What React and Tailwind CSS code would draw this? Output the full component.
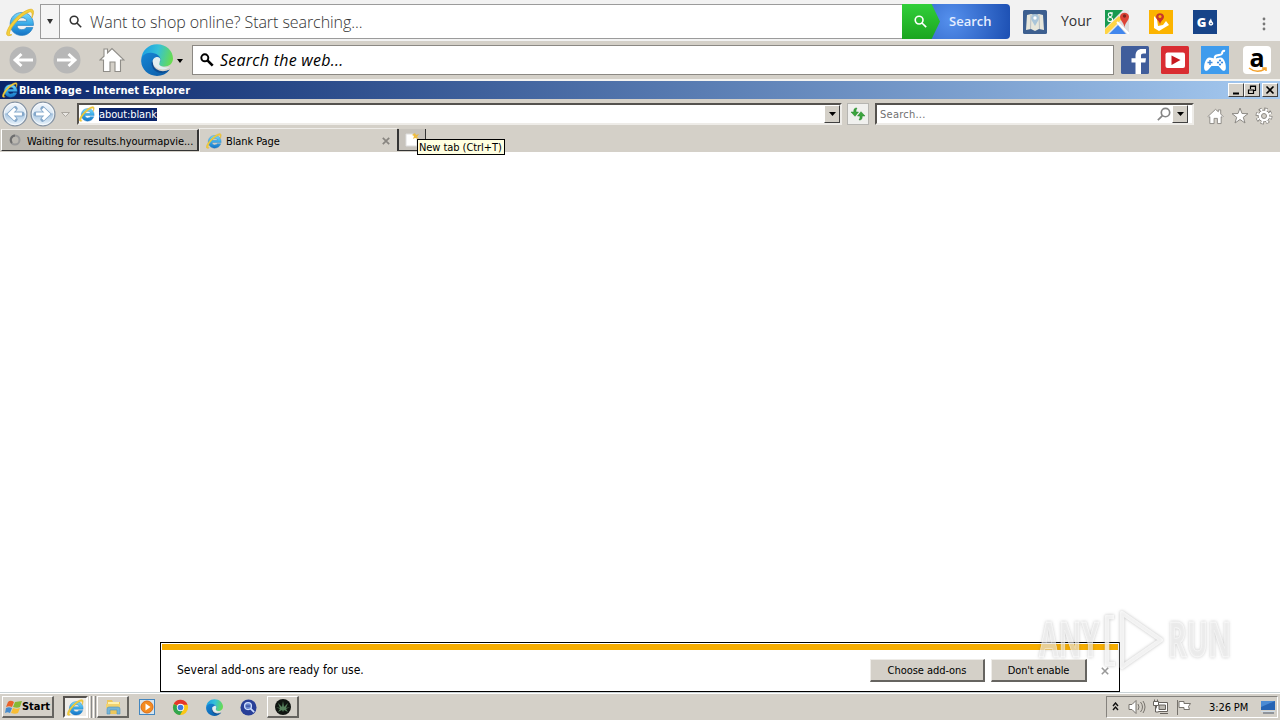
import React from "react";

const UI = "font-['DejaVu_Sans_Condensed','DejaVu_Sans',sans-serif]";
const SEGOE = "font-['Open_Sans','Noto_Sans',sans-serif]";

function Explorer({ id, className }) {
  return (
    <svg viewBox="0 0 28 28" className={className}>
      <defs>
        <linearGradient id={id} x1="0" y1="0" x2="0" y2="1">
          <stop offset="0" stopColor="#7ddcfb" />
          <stop offset=".55" stopColor="#31a5e6" />
          <stop offset="1" stopColor="#1672c4" />
        </linearGradient>
      </defs>
      <path
        d="M26.500 16.800H10.600c.2 2.600 2.100 4.100 4.700 4.100 2 0 3.300-.7 4.200-2.100h6.400c-1.600 4.700-5.700 7.700-10.700 7.700C8.700 26.500 4 21.800 4 15.500S8.800 4.300 15.300 4.300c6.700 0 11.600 5.100 11.200 12.500zM10.700 12.800h9.500c-.4-2.200-2.300-3.500-4.700-3.500s-4.300 1.300-4.800 3.500z"
        fill={`url(#${id})`}
        stroke="#2b83c4"
        strokeWidth=".7"
      />
      <path
        d="M25 9.500C27.500 4 27 .5 23 1.300 15.500 2.800 4.800 13.500 1.600 21c-2 4.700-.8 7.200 4 4.800C3 26.300 2.800 24.200 4.500 20.800 8.200 13.800 17.500 5.200 22.500 3.800c2.700-.7 3.300 1.600 2.500 5.700z"
        fill="#f4d03b"
        stroke="#e3b52a"
        strokeWidth=".8"
      />
    </svg>
  );
}

function Edge({ id, className }) {
  return (
    <svg viewBox="0 0 32 32" className={className}>
      <defs>
        <linearGradient id={id + "t"} x1="0" y1=".3" x2="1" y2=".5">
          <stop offset="0" stopColor="#1b9de2" />
          <stop offset=".5" stopColor="#35c1d8" />
          <stop offset="1" stopColor="#68dc50" />
        </linearGradient>
        <linearGradient id={id + "b"} x1="0" y1="0" x2="1" y2="1">
          <stop offset="0" stopColor="#1686d5" />
          <stop offset="1" stopColor="#0c59a4" />
        </linearGradient>
      </defs>
      <path d="M.3 15C1 6.500 7.500.300 16 .300 25.500.300 32 7 32 14.500c0 5-4 8-8.500 8-4 0-6.200-1.500-5-3.500 1.500-2.500 1-5.500-2-7.500C11.500 8.500 3 10.500.3 15z" fill={`url(#${id}t)`} />
      <path d="M.2 17.500C-.2 12 4.500 8.500 10 8.800c5.500.3 9.500 3.200 9.500 7 0 1.200-.4 2.200-1 3-.5-2.300-2.700-4-5-3.200-4 1.500-3.200 8 1.500 10.800 4.500 2.700 9.500 2 13.800-.9C25.500 30 21 31.900 16 31.900 7.500 31.900.5 25.500.2 17.500z" fill={`url(#${id}b)`} />
      <path d="M10.500 19.500c0 5 4.500 9.500 10 9.500 3.500 0 6-1.300 8.300-3.500-4.300 2.200-9.300 2.500-13.300-.2-3.300-2.200-4.200-6.300-2.300-9-1.600.4-2.700 1.600-2.700 3.200z" fill="#0b4c91" />
      <path d="M19.300 15.200c0-1.300-1.800-2.700-3.800-2.200-2.800.7-4.300 3-3.700 5.700.5 2.500 3.500 5.500 6.800 6.300 4 1 7.600 0 10.600-2.200-4.500 1.300-9.300.3-10.700-1.800-1.200-1.800.9-3 .8-5.800z" fill="#e2eef0" />
    </svg>
  );
}

function Lens({ className, width = 2 }) {
  return (
    <svg viewBox="0 0 16 16" className={className} fill="none" stroke="currentColor" strokeWidth={width}>
      <circle cx="6.300" cy="6.300" r="4.800" />
      <path d="M9.800 9.800 15 15" />
    </svg>
  );
}

function GreyArrow({ className }) {
  return (
    <svg viewBox="0 0 28 28" className={className} fill="none">
      <circle cx="14" cy="14" r="13.500" fill="#b7b7b7" />
      <path d="M24 14H6.500M12.500 8 6 14l6.500 6" stroke="#fff" strokeWidth="2.900" />
    </svg>
  );
}

function GlassArrow({ id, className }) {
  return (
    <svg viewBox="0 0 28 28" className={className} fill="none">
      <defs>
        <linearGradient id={id} x1="0" y1="0" x2="0" y2="1">
          <stop offset="0" stopColor="#f3f7fc" />
          <stop offset=".45" stopColor="#dbe8f4" />
          <stop offset=".5" stopColor="#a9c6e0" />
          <stop offset="1" stopColor="#eef7fe" />
        </linearGradient>
      </defs>
      <circle cx="14" cy="14" r="12.800" fill={`url(#${id})`} stroke="#8593a3" strokeWidth="1.400" />
      <circle cx="14" cy="14" r="11.600" stroke="#fff" strokeOpacity=".75" />
      <path d="M21.500 14H9m5.300-5.800L8.300 14l6 5.800" stroke="#85a8ca" strokeWidth="5.200" strokeLinecap="round" />
      <path d="M21.500 14H9m5.300-5.800L8.300 14l6 5.800" stroke="#fff" strokeWidth="3.400" />
    </svg>
  );
}

function DropButton({ className = "" }) {
  return (
    <div className={`flex items-center justify-center border border-t-white border-l-white border-r-[#404040] border-b-[#404040] bg-[#d4d0c8] ${className}`}>
      <svg viewBox="0 0 7 4" className="h-1 w-[7px]"><path d="M0 0h7L3.500 4z" fill="#000" /></svg>
    </div>
  );
}

function TopBar() {
  return (
    <div className={`flex h-[41px] bg-[#f2f2f2] ${SEGOE}`}>
      <Explorer id="ie1" className="mt-2 ml-1.5 h-[29px] w-[29px] shrink-0" />
      <div className="mt-1 ml-[5px] flex h-[35px] w-[19px] shrink-0 items-center justify-center border border-r-0 border-[#9b9b9b] bg-[#f5f5f5]">
        <svg viewBox="0 0 6 5" className="h-[5px] w-1.5"><path d="M0 0h6L3 5z" fill="#333" /></svg>
      </div>
      <div className="mt-1 flex h-[35px] w-[843px] shrink-0 items-center border border-r-0 border-[#9b9b9b] bg-white text-[#333]">
        <Lens className="ml-[9px] h-[13px] w-[13px]" width={1.9} />
        <span className="ml-2 whitespace-pre text-[16px] leading-none font-light tracking-[-0.06px]">Want to shop online? Start searching...</span>
      </div>
      <div className="mt-1 flex h-[35px] w-[108px] shrink-0 items-center overflow-hidden rounded-r bg-[radial-gradient(circle_at_45%_45%,#5590ed,#1c4fb2)]">
        <div className="flex h-full w-[38px] items-center bg-linear-to-b from-[#31cf3a] to-[#1ba51f] [clip-path:polygon(0_0,78%_0,100%_50%,78%_100%,0_100%)]">
          <Lens className="ml-3 h-[13px] w-[13px] text-white" />
        </div>
        <span className="ml-[9px] text-[13px] leading-none font-semibold text-[#e5efff]">Search</span>
      </div>
      <svg viewBox="0 0 24 24" className="mt-2.5 ml-[13px] h-6 w-6 shrink-0">
        <rect width="24" height="24" rx="1.500" fill="#3d5f8f" />
        <path d="m4 5 4-1 4 1 4-1 4 1 1 15-5-1-4 2-4-2-5 1z" fill="#e7e7dc" />
        <path d="m8 5-.5 14M16 5l.5 14" stroke="#b9bfc3" />
        <path d="M12 16 8.500 10a4 4 0 1 1 7 0z" fill="#a9c5d9" /><circle cx="12" cy="8" r="1.700" fill="#fff" />
      </svg>
      <span className="mt-3.5 ml-3.5 w-[31px] text-[14px] leading-none text-[#333]">Your</span>
      <svg viewBox="0 0 24 24" className="mt-2.5 ml-[13px] h-6 w-6 shrink-0">
        <rect width="24" height="24" fill="#e8e8e8" />
        <path d="M0 0h18L0 18z" fill="#189a50" />
        <path d="M24 5v19h-3l-9-10z" fill="#ddd" />
        <path d="m4 24 9-9 8 9z" fill="#4287ed" />
        <path d="m0 19 14-13 3 3L2 24H0z" fill="#ffd545" />
        <path d="m12 12 12 12" stroke="#fff" strokeWidth="2" />
        <g fill="none" stroke="#fff" strokeWidth="1.100"><circle cx="5.200" cy="4.800" r="1.900" /><ellipse cx="5.200" cy="9.500" rx="2.400" ry="2" /><path d="M5 3h3" /></g>
        <path d="M19.500 18c0-5-4.500-7-4.500-11.500a4.600 4.600 0 0 1 9 0c0 4.500-4.500 6.500-4.500 11.500z" fill="#dc4437" /><circle cx="19.500" cy="6" r="1.700" fill="#7d2721" />
      </svg>
      <svg viewBox="0 0 24 24" className="mt-2.5 ml-5 h-6 w-6 shrink-0">
        <rect width="24" height="24" fill="#fcb400" />
        <path d="m5 6 3 3 1 7 5-1 3-4 3 4-10 6-5-3z" fill="#fff" />
        <path d="M11 15c0-4-4-5-4-8.500a4.100 4.100 0 0 1 8 0c0 3.500-4 4.500-4 8.500z" fill="#c9372a" /><circle cx="11" cy="6.500" r="1.500" fill="#fcb400" />
      </svg>
      <div className="mt-2.5 ml-5 flex h-6 w-6 shrink-0 items-center justify-center bg-[#174489] text-white">
        <span className="ml-px text-[13px] leading-none font-extrabold">G</span>
        <svg viewBox="0 0 8 10" className="ml-0.5 h-2 w-1.5"><path d="M4 0C3 3 0 4 1 8c1 3 6 2 6-1 0-2-2-2-3-7z" fill="#fff" /><circle cx="4" cy="7" r="1" fill="#174489" /></svg>
      </div>
      <svg viewBox="0 0 4 14" className="mt-[17px] ml-[45px] h-[14px] w-1 shrink-0" fill="#777"><circle cx="2" cy="2" r="1.400" /><circle cx="2" cy="7" r="1.400" /><circle cx="2" cy="12" r="1.400" /></svg>
    </div>
  );
}

function SearchBar() {
  return (
    <div className="flex h-10 border-b-2 border-[#f5f4f1] bg-[#d4d0c8]">
      <GreyArrow className="mt-[5px] ml-[9px] h-7 w-7 shrink-0" />
      <GreyArrow className="mt-[5px] ml-4 h-7 w-7 shrink-0 -scale-x-100" />
      <svg viewBox="0 0 26 26" className="mt-1.5 ml-[18px] h-[26px] w-[26px] shrink-0">
        <path d="M1 13 5 9.200V2h3.500v4L13 1.500 25 13h-3.500v11.500H16V15h-5v9.500H4.500V13z" fill="#fff" stroke="#8f8d88" strokeWidth="1.100" />
      </svg>
      <Edge id="edge1" className="mt-[3px] ml-[16px] h-8 w-8 shrink-0" />
      <svg viewBox="0 0 6 4" className="mt-[18px] ml-1 h-1 w-1.5 shrink-0"><path d="M0 0h6L3 4z" /></svg>
      <div className={`mt-1 ml-[9px] flex h-[30px] w-[922px] shrink-0 items-center border border-[#8b8883] bg-white ${SEGOE}`}>
        <svg viewBox="0 0 16 16" className="ml-[7px] h-3.5 w-3.5" fill="none" stroke="#000"><circle cx="5.500" cy="5.500" r="4" strokeWidth="2.200" /><path d="m8.500 8.500 6 6" strokeWidth="3" /></svg>
        <span className="ml-[6px] whitespace-pre text-[16px] leading-none tracking-[0.24px] text-black italic">Search the web...</span>
      </div>
      <svg viewBox="0 0 28 28" className="mt-[5px] ml-[7px] h-7 w-7 shrink-0">
        <rect width="28" height="28" rx="1.500" fill="#405d9b" />
        <path d="M14.500 28V16.500h-4v-4.200h4V10c0-4.500 2.500-7 6.500-7H25v4.400h-2.500c-2 0-2.500.8-2.500 2.300v2.600h5l-.6 4.200H20V28z" fill="#fff" />
      </svg>
      <svg viewBox="0 0 28 28" className="mt-[5px] ml-3 h-7 w-7 shrink-0">
        <rect width="28" height="28" rx="1.500" fill="#d92d32" /><rect x="4.500" y="6.500" width="19.500" height="15.500" rx="2" fill="#fff" /><path d="m10.500 9.500 9 4.500-9 5z" fill="#c81920" />
      </svg>
      <svg viewBox="0 0 28 28" className="mt-[5px] ml-3 h-7 w-7 shrink-0">
        <rect width="28" height="28" fill="#3f9ced" />
        <path d="M14 13c-1.500-5.500 6-2.500 7-5.500.3-2 1-3 3-2.500" fill="none" stroke="#fff" strokeWidth="2.200" />
        <path d="M8.500 11.500c2.500 0 3 1 5.500 1s3-1 5.500-1c4 0 6 8 5.200 11.500-.5 2.500-3 2-4.200.5L17.500 20h-7l-3 3.500c-1.200 1.500-3.700 2-4.200-.5C2.500 19.500 4.500 11.500 8.500 11.500z" fill="#fff" />
        <path d="M9 14v5M6.500 16.500h5" stroke="#3f8bdb" strokeWidth="1.400" /><g fill="#3f8bdb"><circle cx="19" cy="14.500" r="1.100" /><circle cx="19" cy="18.500" r="1.100" /><circle cx="17" cy="16.500" r="1.100" /><circle cx="21" cy="16.500" r="1.100" /></g>
      </svg>
      <div className="mt-[5px] ml-3.5 flex h-7 w-7 shrink-0 flex-col items-center rounded-sm bg-white">
        <span className="mt-0.5 h-[18px] font-['Open_Sans',sans-serif] text-[25px] leading-[18px] font-bold text-black">a</span>
        <svg viewBox="0 0 20 6" className="mt-px ml-0.5 h-1.5 w-5"><path d="M1 1c5 4 11 4 16 1M14 1h4v3" fill="none" stroke="#f3a12b" strokeWidth="1.500" /></svg>
      </div>
    </div>
  );
}

function CaptionButton({ children }) {
  return (
    <div className="h-3.5 w-4 border border-t-white border-l-white border-r-[#404040] border-b-[#404040] bg-[#d4d0c8]">
      <svg viewBox="0 0 14 12" className="h-3 w-3.5" fill="none" stroke="#000">{children}</svg>
    </div>
  );
}

function TitleBar() {
  return (
    <div className="flex h-[18px] items-center bg-linear-to-r from-[#0a246a] to-[#a6caf0]">
      <Explorer id="ie2" className="ml-0.5 h-4 w-4" />
      <span className={`ml-px whitespace-pre text-[11px] leading-none font-bold tracking-[0.07px] text-white ${UI}`}>Blank Page - Internet Explorer</span>
      <div className="mr-0.5 ml-auto flex">
        <CaptionButton><path d="M4 9.500h6" strokeWidth="2" /></CaptionButton>
        <CaptionButton><path d="M5.500 5V2h5v4.500H9M5 2.500h6M3 6h5.500M3.500 5.500v4h5v-4" strokeWidth="1.200" /></CaptionButton>
        <div className="w-0.5" />
        <CaptionButton><path d="m3.500 2.500 7 7m0-7-7 7" strokeWidth="1.600" /></CaptionButton>
      </div>
    </div>
  );
}

function AddressBar() {
  return (
    <div className="flex h-[29px] bg-[#d4d0c8]">
      <GlassArrow id="back" className="mt-0.5 ml-0.5 h-[26px] w-[26px] shrink-0" />
      <GlassArrow id="forward" className="mt-0.5 ml-0.5 h-[26px] w-[26px] shrink-0 -scale-x-100" />
      <svg viewBox="0 0 9 5" className="mt-[13px] ml-[5px] h-[5px] w-[9px] shrink-0"><path d="M.5.500h8l-4 4z" fill="#e9e7e3" stroke="#aaa69f" /></svg>
      <div className="mt-1 ml-[7px] flex h-[22px] w-[765px] shrink-0 items-center border-2 border-t-[#55524e] border-r-[#eeece8] border-b-[#eeece8] border-l-[#55524e] bg-white">
        <Explorer id="ie3" className="h-4 w-4 shrink-0" />
        <span className={`ml-1 bg-[#0a246a] whitespace-pre text-[11px] leading-[13px] tracking-[-0.1px] text-white ${UI}`}>about:blank</span>
        <DropButton className="ml-auto h-[18px] w-4 shrink-0" />
      </div>
      <div className="mt-1 ml-[5px] flex h-[22px] w-[22px] shrink-0 items-center justify-center border border-[#b6b5b1] bg-[#f0f0ee]">
        <svg viewBox="0 0 16 16" className="h-4 w-4" fill="#3ba53e" stroke="#24832a" strokeWidth=".5"><path d="M7 2C4 2 3.800 3.500 3.800 6H1l4 4.300L8.500 6H6c0-1.700 0-2.500 1-4zM9 14c3 0 3.200-1.500 3.200-4H15l-4-4.300L7.500 10H10c0 1.700 0 2.500-1 4z" /></svg>
      </div>
      <div className="mt-1 ml-1.5 flex h-[22px] w-[319px] shrink-0 items-center border-2 border-t-[#55524e] border-r-[#eeece8] border-b-[#eeece8] border-l-[#55524e] bg-white">
        <span className={`mt-px ml-[3px] text-[11px] leading-none tracking-[0.25px] text-[#707070] ${UI}`}>Search...</span>
        <Lens className="ml-auto h-3.5 w-3.5 -scale-x-100 text-[#858585]" width={1.9} />
        <DropButton className="mr-1 ml-px h-[18px] w-4 shrink-0" />
      </div>
      <svg viewBox="0 0 18 18" className="mt-2 ml-[13px] h-[18px] w-[17px] shrink-0" fill="#fff" stroke="#8c8984" strokeWidth="1"><path d="M1 9.500 9 2l3 2.500V2.500h2.500v4.300L17 9.500l-1 1-1-.8V17h-4v-5.500H7.500V17H3V9.700l-1 .8z" /></svg>
      <svg viewBox="0 0 18 18" className="mt-2 ml-[7px] h-[18px] w-[18px] shrink-0" fill="#fff" stroke="#8c8984" strokeWidth="1"><path d="m9 1 2 5.500 6 .2-4.700 3.600L14 16l-5-3.500L4 16l1.700-5.700L1 6.700l6-.2z" /></svg>
      <svg viewBox="0 0 18 18" className="mt-2 ml-[6px] h-[18px] w-[18px] shrink-0">
        <circle cx="9" cy="9" r="7" fill="none" stroke="#8c8984" strokeWidth="3" strokeDasharray="3.300 2.198" />
        <circle cx="9" cy="9" r="5.800" fill="#fff" stroke="#8c8984" strokeWidth=".9" />
        <circle cx="9" cy="9" r="6.500" fill="none" stroke="#fff" strokeWidth="2.400" strokeDasharray="1.800 3.305" strokeDashoffset="-.6" />
        <circle cx="9" cy="9" r="2.500" fill="#d4d0c8" stroke="#8c8984" />
      </svg>
    </div>
  );
}

function Tabs() {
  return (
    <div className={`flex h-6 bg-[#d4d0c8] text-[11px] leading-none text-black ${UI}`}>
      <div className="mt-px ml-px flex h-[22px] w-[198px] items-center border border-t-[#eeece8] border-r-2 border-r-[#343434] border-b-[#343434] border-l-white bg-[#bbb8b1]">
        <svg viewBox="0 0 12 12" className="ml-[7px] h-3 w-3" fill="none" strokeWidth="2"><circle cx="6" cy="6" r="4.500" stroke="#999" /><path d="M6 1.500A4.500 4.500 0 0 0 3 9" stroke="#6e6e6e" /></svg>
        <span className="mt-0.5 ml-[6px] whitespace-pre tracking-[-0.04px]">Waiting for results.hyourmapvie...</span>
      </div>
      <div className="flex h-6 w-[198px] items-center border-t border-l border-[#eeece8]">
        <Explorer id="ie4" className="ml-1.5 h-4 w-4" />
        <span className="mt-px ml-1 whitespace-pre tracking-[-0.1px]">Blank Page</span>
        <svg viewBox="0 0 8 8" className="mr-[7px] ml-auto h-2 w-2"><path d="m.8.800 6.400 6.400m0-6.400L.8 7.200" stroke="#888580" strokeWidth="1.700" /></svg>
      </div>
      <div className="relative mt-px h-[22px] w-[29px] border-r border-b border-l-2 border-[#343434] bg-[#c7c3bc]">
        <svg viewBox="0 0 14 14" className="mt-1 ml-1.5 h-3.5 w-3.5"><path d="M1 1h7l4 4v8H1z" fill="#fff" stroke="#ddd" /><path d="m10 0 1 2 3-1-2 3 2 2-4-1-2 1 1-3-2-1z" fill="#eebc40" /></svg>
        <div className="absolute top-[10px] left-[18px] flex h-4 w-[88px] items-center border border-black bg-[#ffffe1]">
          <span className="ml-px whitespace-pre tracking-[-0.06px]">New tab (Ctrl+T)</span>
        </div>
      </div>
    </div>
  );
}

function PushButton({ className, children }) {
  return (
    <div className={`flex h-[23px] shrink-0 items-center justify-center border border-t-[#eeece8] border-l-[#eeece8] border-r-2 border-b-2 border-r-[#666460] border-b-[#666460] bg-[#d4d0c8] pt-0.5 ${className}`}>{children}</div>
  );
}

function Notice() {
  return (
    <div className={`ml-40 h-[50px] w-[960px] border border-black bg-white px-px pt-px text-black ${UI}`}>
      <div className="h-1.5 bg-[#f6ad00]" />
      <div className="flex h-[40px] items-center">
        <span className="ml-[15px] whitespace-pre text-[12px] leading-none">Several add-ons are ready for use.</span>
        <PushButton className="mr-1.5 ml-auto w-[115px] text-[11px] leading-none tracking-[-0.05px]">Choose add-ons</PushButton>
        <PushButton className="w-24 text-[11px] leading-none tracking-[-0.15px]">Don't enable</PushButton>
        <svg viewBox="0 0 8 8" className="mt-px mr-[9px] ml-3.5 h-2 w-2"><path d="m.8.800 6.400 6.400m0-6.400L.8 7.200" stroke="#999" strokeWidth="1.600" /></svg>
      </div>
    </div>
  );
}

function Watermark() {
  return (
    <svg viewBox="0 0 220 72" className="pointer-events-none absolute right-[30px] bottom-[43px] h-[72px] w-[220px] overflow-visible [filter:drop-shadow(0_0_1.5px_rgba(90,90,90,.5))]">
      <g className="font-['Open_Sans',sans-serif] font-bold" fontSize="49" fill="#fff" fillOpacity=".55" stroke="#fff" strokeOpacity=".65" strokeWidth=".8">
        <text x="9" y="52" textLength="60" lengthAdjust="spacingAndGlyphs">ANY</text>
        <text x="138" y="52" textLength="63" lengthAdjust="spacingAndGlyphs">RUN</text>
      </g>
      <path d="M92 8 131 35 92 62zM84 12h-7v47h8" fill="none" stroke="#fff" strokeOpacity=".75" strokeWidth="4.500" strokeLinejoin="round" />
    </svg>
  );
}

function TaskButton({ className = "", children }) {
  return (
    <div className={`flex h-[22px] shrink-0 items-center justify-center border border-t-white border-r-2 border-b-2 border-l-white border-r-[#666460] border-b-[#666460] bg-[#d4d0c8] ${className}`}>{children}</div>
  );
}

function Taskbar() {
  return (
    <div className={`flex h-7 items-start border-t border-[#c9d2d5] bg-[#d4d0c8] pt-[3px] shadow-[inset_0_1px_0_white] ${UI}`}>
      <TaskButton className="ml-0.5 w-[52px]">
        <svg viewBox="0 0 17 16" className="h-4 w-[17px]"><path d="M3 3c2-2 4-1 6 0L7 8C5 7 3 7 1 8z" fill="#ea622a" /><path d="m10 3 7-1-2 6c-2 1-4 1-7 0z" fill="#86b935" /><path d="M1 9c2-1 4-1 6 0l-2 5c-2-1-3-1-5 0z" fill="#458bce" /><path d="M8 9c3 1 4 1 7 0l-2 5c-2 1-4 1-7 0z" fill="#f8bd35" /></svg>
        <span className="text-[11px] leading-none font-bold text-black">Start</span>
      </TaskButton>
      <div className="ml-[9px] flex h-[22px] w-[25px] items-center justify-center border-2 border-t-[#55524e] border-l-[#55524e] border-r-white border-b-white bg-[#eeece8]"><Explorer id="ie5" className="h-[17px] w-[17px]" /></div>
      <div className="ml-px h-[22px] w-[3px] border-x border-l-white border-r-[#888]" />
      <div className="ml-px h-[22px] w-[3px] border-x border-l-white border-r-[#888]" />
      <TaskButton className="ml-[1px] w-8">
        <svg viewBox="0 0 18 18" className="h-[18px] w-[18px]"><path d="M3 2h5l1 2h7v12H3z" fill="#edc75b" /><path d="M4 4h11v7H4z" fill="#fff2ae" /><path d="M2 6h14v4H2z" fill="#f2d36f" /><path d="M3 16v-5q0-2 2-2h9q2 0 2 2v5h-3v-4H6v4z" fill="#77b5d7" stroke="#4e91bc" strokeWidth=".6" /></svg>
      </TaskButton>
      <svg viewBox="0 0 18 18" className="mt-0.5 ml-[9px] h-[18px] w-[18px] shrink-0"><rect x="1.500" y="1.500" width="15" height="15" fill="#d6e5ef" stroke="#4386bf" /><circle cx="9" cy="9" r="6" fill="#f48b20" stroke="#dc6c15" /><path d="m7.500 5.500 5 3.500-5 3.500z" fill="#fff" /></svg>
      <svg viewBox="0 0 18 18" className="mt-[3px] ml-4 h-[17px] w-[17px] shrink-0"><circle cx="9" cy="9" r="8" fill="#fbc614" /><path d="M9 9 1.900 5A8 8 0 0 1 16.500 6H9z" fill="#e5352b" /><path d="M2 5.200A8 8 0 0 0 8.500 17l3.300-6L9 9z" fill="#31a64e" /><circle cx="9" cy="9" r="3.900" fill="#fff" /><circle cx="9" cy="9" r="3" fill="#3f79df" /></svg>
      <Edge id="edge2" className="mt-[3px] ml-[17px] h-[17px] w-[17px] shrink-0" />
      <svg viewBox="0 0 18 18" className="mt-[3px] ml-[17px] h-[17px] w-[17px] shrink-0"><circle cx="9" cy="9" r="8.500" fill="#283f98" /><circle cx="8.500" cy="7.500" r="3.700" fill="#6886cf" stroke="#d1e0ff" strokeWidth="1.200" /><path d="m11 10 4 4" stroke="#cddcff" strokeWidth="1.800" /><path d="M6.500 7.500h4" stroke="#26388c" /></svg>
      <TaskButton className="ml-[10px] w-8">
        <svg viewBox="0 0 18 18" className="h-[18px] w-[18px]"><circle cx="9" cy="9" r="8" fill="#101411" /><path d="m9 14-1-2-4 2 2-3-4-2 4 1-2-5 4 4 1-6 1 6 4-4-2 5 4-1-4 2 2 3-4-2z" fill="#56805c" /></svg>
      </TaskButton>
      <div className="mr-0.5 ml-auto flex h-[22px] w-[172px] shrink-0 items-center border border-t-[#85827d] border-r-white border-b-white border-l-[#85827d]">
        <svg viewBox="0 0 7 9" className="mb-0.5 ml-[5px] h-[9px] w-[7px]" fill="none" stroke="#111" strokeWidth="1.400"><path d="m1 4 2.500-3L6 4M1 8l2.500-3L6 8" /></svg>
        <svg viewBox="0 0 18 16" className="ml-[9px] h-4 w-[18px]" fill="#fff" stroke="#77736d"><path d="M1 5.500h3l4-4v13l-4-4H1z" /><path d="M10 5q2 3 0 6M12.500 3q4 5 0 10M15 2q4 6 0 12" fill="none" /></svg>
        <svg viewBox="0 0 18 16" className="ml-[6px] h-4 w-[18px]" fill="#fff" stroke="#66625d"><path d="M4.500 3.500h11v9h-11zM8 14.500h8" /><path d="M7 6h6.500v4.500H7z" fill="#bcb9b2" /><path d="M1.500 2.500h5v4h-5zM2.500.500v2M5.500.500v2M3.500 7v6h3" /></svg>
        <svg viewBox="0 0 16 16" className="ml-[6px] h-4 w-4" fill="#fff" stroke="#77736d"><path d="M1.500 1v15M3 2.500h5v2h6.500l-2 3 1 3H8v-2H3z" /></svg>
        <span className="ml-[17px] whitespace-pre text-[11px] leading-none tracking-[-0.1px] text-black">3:26 PM</span>
        <svg viewBox="0 0 16 14" className="mr-px ml-auto h-3.5 w-4"><path d="M1 1h14v9H1z" fill="#2664b4" /><path d="M1 1h14L1 7z" fill="#4b8bd4" /><path d="M1 11h14v1H1z" fill="#cfdce7" /><path d="M3 13h11" stroke="#4d596d" /></svg>
      </div>
    </div>
  );
}

export default function App() {
  return (
    <div className="relative flex h-[720px] w-[1280px] flex-col overflow-hidden bg-white">
      <TopBar />
      <SearchBar />
      <TitleBar />
      <AddressBar />
      <Tabs />
      <main className="flex min-h-0 flex-1 flex-col justify-end"><Notice /></main>
      <Taskbar />
      <Watermark />
    </div>
  );
}
